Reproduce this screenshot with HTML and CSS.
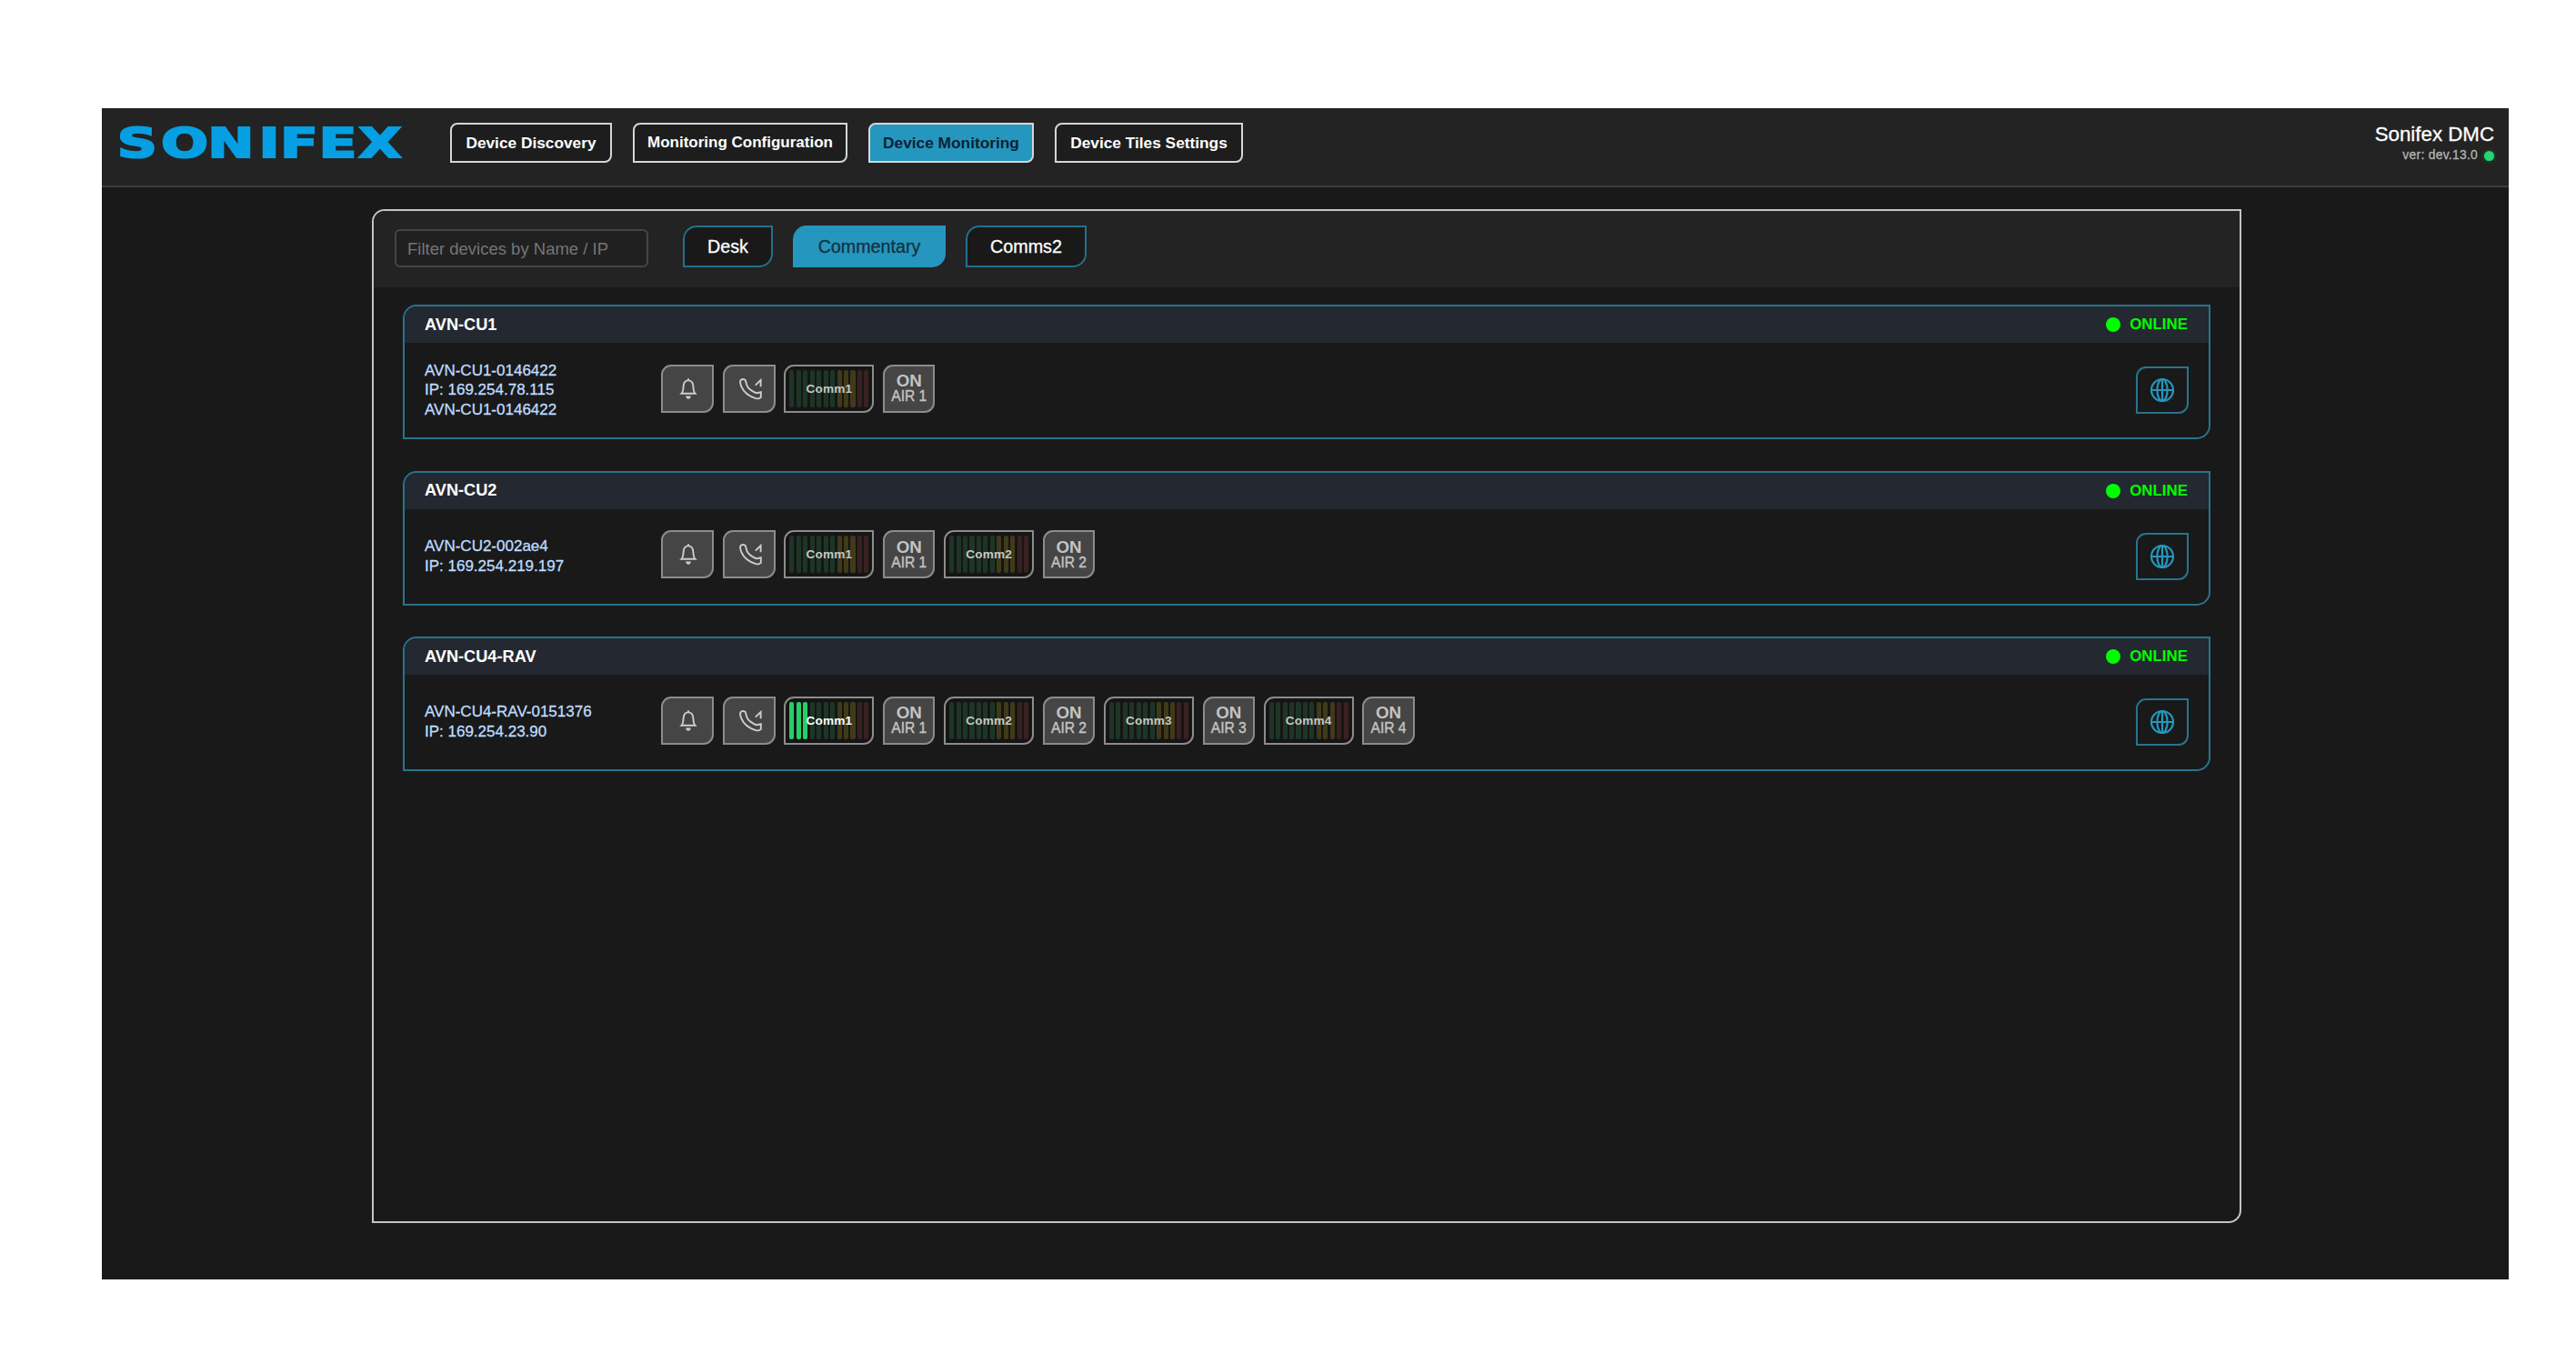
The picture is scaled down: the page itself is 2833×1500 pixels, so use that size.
FILE: index.html
```html
<!DOCTYPE html>
<html lang="en">
<head>
  <meta charset="UTF-8">
  <meta name="viewport" content="width=device-width, initial-scale=1.0">
  <title>Sonifex DMC</title>
  <link rel="stylesheet" href="styles.css">
</head>
<body>
  <div class="app">
    <header class="topbar">
      <svg class="logo" width="320" height="44" viewBox="0 0 320 44" role="img">
        <g transform="scale(1.38 1)">
          <text y="38.500" x="-1.5 33.6 70.600 111.400 128.500 159.200 191">SONIFEX</text>
        </g>
      </svg>
      <nav class="nav">
        <button class="nav-btn discovery">Device Discovery</button>
        <button class="nav-btn config">Monitoring Configuration</button>
        <button class="nav-btn monitoring active">Device Monitoring</button>
        <button class="nav-btn tiles-settings">Device Tiles Settings</button>
      </nav>
      <div class="about">
        <div class="product">Sonifex DMC</div>
        <div class="version">ver: dev.13.0 <span class="version-dot"></span></div>
      </div>
    </header>

    <main class="panel">
      <div class="filter-bar">
        <input type="text" class="filter" placeholder="Filter devices by Name / IP">
        <button class="tab desk">Desk</button>
        <button class="tab commentary active">Commentary</button>
        <button class="tab comms">Comms2</button>
      </div>
      <div class="devices" id="devices"></div>
    </main>
  </div>

  <script>
    const devices = [
      { name: 'AVN-CU1', info: ['AVN-CU1-0146422', 'IP: 169.254.78.115', 'AVN-CU1-0146422'], levels: [0] },
      { name: 'AVN-CU2', info: ['AVN-CU2-002ae4', 'IP: 169.254.219.197'], levels: [0, 0] },
      { name: 'AVN-CU4-RAV', info: ['AVN-CU4-RAV-0151376', 'IP: 169.254.23.90'], levels: [3, 0, 0, 0] }
    ];

    const bell = `
      <svg class="icon bell" width="24" height="25" viewBox="0 0 24 25">
        <path d="M12 1.2v2M4.4 17.8h15.2c-1.6-1.6-2-3.6-2.2-7.6C17.2 6 15 3.4 12 3.4S6.8 6 6.6 10.2c-.2 4-.6 6-2.2 7.6z"/>
        <path class="solid" d="M9.2 20.6h5.6c0 2-1.2 3.2-2.8 3.2s-2.8-1.2-2.8-3.2z"/>
      </svg>`;

    const phone = `
      <svg class="icon phone" width="28" height="25" viewBox="0 0 28 25">
        <path d="M2.300 3.600C3.500 1.700 6.800 1.500 7.900 3.300L9 7.400c.8 3.200 3.200 5.600 6.200 7.500 2.400 1.500 3.600 2.300 5.400 2.300l4.200-1V21.800c-1.600 1.600-3.600 1.900-5.600 1.300C12.600 21 5.800 16 3.200 9.800 2.300 7.400 1.700 5.400 2.300 3.600z"/>
        <path d="M18.800 8.600L24.600 3V10.300"/>
      </svg>`;

    const globe = `
      <svg class="globe" width="28" height="28" viewBox="0 0 28 28">
        <circle cx="14" cy="14" r="12"/>
        <ellipse cx="14" cy="14" rx="5.600" ry="12"/>
        <path d="M14 2v24M2 14h24"/>
      </svg>`;

    // 7 green, 3 yellow, 2 red segments
    function meter(n, level) {
      let bars = '';
      for (let i = 0; i < 12; i++) {
        const color = i < 7 ? 'green' : i < 10 ? 'yellow' : 'red';
        bars += `<i class="bar ${color}${i < level ? ' lit' : ''}"></i>`;
      }
      return `
        <div class="meter${level ? ' live' : ''}">${bars}<span class="meter-label">Comm${n}</span></div>
        <div class="tile on-air"><b>ON</b><span>AIR ${n}</span></div>`;
    }

    document.getElementById('devices').innerHTML = devices.map(d => `
      <section class="card">
        <div class="card-head">
          <span class="card-title">${d.name}</span>
          <span class="status"><span class="status-dot"></span>ONLINE</span>
        </div>
        <div class="card-body">
          <div class="info">${d.info.map(line => `<div>${line}</div>`).join('')}</div>
          <div class="tiles">
            <div class="tile">${bell}</div>
            <div class="tile">${phone}</div>
            ${d.levels.map((level, i) => meter(i + 1, level)).join('')}
          </div>
          <button class="web-btn">${globe}</button>
        </div>
      </section>
    `).join('');
  </script>
</body>
</html>
```
FILE: styles.css
```css
* {
  box-sizing: border-box;
}
body {
  margin: 0;
  padding: 119px 74px 93px 112px;
  background-color: #fff;
  font-family: "Liberation Sans", Arial, sans-serif;
}
button {
  font-family: inherit;
  padding: 0;
  white-space: nowrap;
}
.app {
  height: 1288px;
  background-color: #191919;
}

/* Top bar */
.topbar {
  display: flex;
  align-items: flex-start;
  height: 87px;
  padding: 16px 16px 0 19px;
  background-color: #232323;
  border-bottom: 2px solid #3d3d3d;
}
.logo {
  margin: -1px 44px 0 0;
  overflow: visible;
}
.logo text {
  font-family: "DejaVu Sans", sans-serif;
  font-weight: bold;
  font-size: 44px;
  fill: #069fe3;
  stroke: #069fe3;
  stroke-width: 2.2;
}
.nav {
  display: flex;
  gap: 23px;
}
.nav-btn {
  height: 44px;
  border: 2px solid #d6d6d6;
  border-radius: 8px 0;
  background-color: #1d1d1d;
  color: #fff;
  font-size: 17.3px;
  font-weight: bold;
}
.nav-btn.discovery {
  width: 178px;
}
.nav-btn.config {
  width: 236px;
  font-size: 17px;
}
.nav-btn.monitoring {
  width: 182px;
}
.nav-btn.tiles-settings {
  width: 207px;
}
.nav-btn.active {
  background-color: #2596be;
  color: #0b2233;
}
.about {
  margin-left: auto;
  text-align: right;
}
.product {
  color: #fff;
  font-size: 22.3px;
  line-height: 25px;
  -webkit-text-stroke: 0.3px;
}
.version {
  display: flex;
  align-items: center;
  justify-content: flex-end;
  gap: 7px;
  color: #b4b4b4;
  font-size: 13.8px;
  letter-spacing: 0.3px;
  line-height: 22px;
  -webkit-text-stroke: 0.3px;
}
.version-dot {
  width: 11px;
  height: 11px;
  border-radius: 50%;
  background-color: #22d671;
  box-shadow: 0 0 4px #1c6a41;
}

/* Main panel */
.panel {
  width: 2056px;
  height: 1115px;
  margin: 24px 0 0 297px;
  border: 2px solid #c4c4c4;
  border-radius: 14px 0;
  overflow: hidden;
}
.filter-bar {
  display: flex;
  align-items: flex-start;
  height: 84px;
  padding: 16px 0 0 23px;
  background-color: #232323;
}
.filter {
  width: 279px;
  height: 42px;
  margin: 4px 38px 0 0;
  padding: 1px 12px 0;
  border: 2px solid #454545;
  border-radius: 6px;
  background-color: #202020;
  font-family: inherit;
  font-size: 18.5px;
}
.filter::placeholder {
  color: #757575;
}
.tab {
  height: 46px;
  margin-right: 22px;
  border: 2px solid #22708c;
  border-radius: 15px 0;
  background-color: #191919;
  color: #fff;
  font-size: 19.7px;
  -webkit-text-stroke: 0.3px;
}
.tab.desk {
  width: 99px;
}
.tab.commentary {
  width: 168px;
}
.tab.comms {
  width: 133px;
}
.tab.active {
  border-color: #2596be;
  background-color: #2596be;
  color: #15303f;
}

/* Device cards */
.devices {
  display: flex;
  flex-direction: column;
  gap: 34.5px;
  padding: 19px 32px 0;
}
.card {
  height: 148px;
  border: 2px solid #27748f;
  border-radius: 15px 0;
  overflow: hidden;
}
.card-head {
  display: flex;
  align-items: center;
  justify-content: space-between;
  height: 40px;
  padding: 0 23px 0 22px;
  background-color: #242830;
}
.card-title {
  color: #fff;
  font-size: 18.2px;
  font-weight: bold;
}
.status {
  display: flex;
  align-items: center;
  gap: 10px;
  color: #0f0;
  font-size: 16.9px;
  font-weight: bold;
}
.status-dot {
  width: 16px;
  height: 16px;
  border-radius: 50%;
  background-color: #0f0;
}
.card-body {
  display: flex;
  align-items: center;
  height: 104px;
  padding: 0 22px;
}
.info {
  width: 260px;
  color: #bfdcff;
  font-size: 17px;
  line-height: 21.6px;
  -webkit-text-stroke: 0.3px;
}
.tiles {
  display: flex;
  gap: 9.7px;
  margin-bottom: 4px;
}
.tile, .meter {
  display: flex;
  align-items: center;
  justify-content: center;
  height: 53px;
  border: 2px solid #8c8c8c;
  border-radius: 11px 0;
}
.tile {
  width: 58px;
  background-color: #454545;
}
.icon {
  fill: none;
  stroke: #cdcdcd;
  stroke-width: 1.9;
}
.icon .solid {
  fill: #cdcdcd;
  stroke: none;
}
.icon.bell {
  margin-left: 1px;
}
.icon.phone {
  margin-left: 4px;
}
.tile.on-air {
  width: 57.4px;
  flex-direction: column;
  color: #c3c3c3;
}
.on-air b {
  font-size: 18.8px;
  line-height: 18px;
}
.on-air span {
  font-size: 15.6px;
  line-height: 16px;
  -webkit-text-stroke: 0.4px;
}
.meter {
  position: relative;
  width: 99px;
  gap: 2.4px;
  padding: 0 4px;
  background-color: #151515;
}
.bar {
  flex: 1;
  height: 41px;
  border-radius: 2px;
}
.bar.green {
  background-color: #1d3527;
}
.bar.yellow {
  background-color: #403a19;
}
.bar.red {
  background-color: #3b2020;
}
.bar.green.lit {
  background-color: #25cf68;
}
.meter-label {
  position: absolute;
  inset: 0;
  color: #c6c6c6;
  font-size: 13.6px;
  font-weight: bold;
  letter-spacing: 0.2px;
  line-height: 50px;
  text-align: center;
}
.meter.live .meter-label {
  color: #fff;
}
.web-btn {
  display: flex;
  align-items: center;
  justify-content: center;
  width: 58px;
  height: 52px;
  margin-left: auto;
  border: 2px solid #27748f;
  border-radius: 11px 0;
  background: none;
}
.globe {
  fill: none;
  stroke: #2596be;
  stroke-width: 2.2;
}
```
